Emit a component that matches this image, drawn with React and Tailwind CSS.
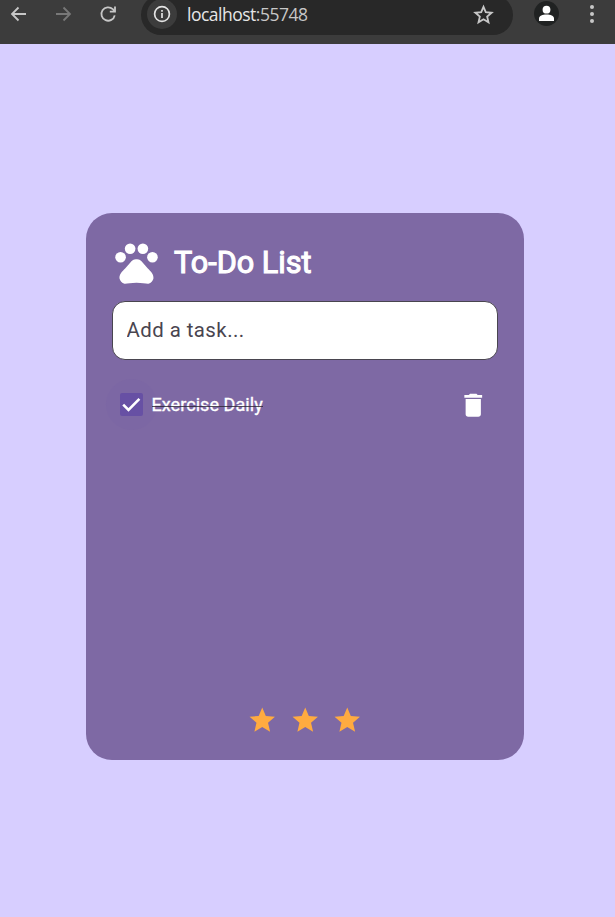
import React from "react";

function BrowserBar() {
  return (
    <header className="flex h-[44px] w-full shrink-0 items-start overflow-hidden bg-[#3c3c3c] text-[#c7c7c7]">
      <div className="flex h-[28px] w-[141px] shrink-0 items-center pl-[9px]">
        <svg className="h-5 w-5" viewBox="0 0 20 20" fill="none" stroke="currentColor" strokeWidth="1.8">
          <path d="M17 10H3.5M9.5 3.5L3 10l6.500 6.500" />
        </svg>
        <svg className="ml-6 h-5 w-5 text-[#787878]" viewBox="0 0 20 20" fill="none" stroke="currentColor" strokeWidth="1.8">
          <path d="M3 10h13.500M10.500 3.500L17 10l-6.500 6.500" />
        </svg>
        <svg className="ml-[25px] h-5 w-5" viewBox="0 0 20 20" fill="none" stroke="currentColor" strokeWidth="1.8">
          <path d="M16.700 11.300A6.700 6.700 0 1 1 14.800 5.200L16.300 6.800" />
          <path d="M17 2.500V7.700H11.800" />
        </svg>
      </div>
      <div className="-mt-[5px] flex h-10 w-[372px] shrink-0 items-center rounded-full bg-[#282828] pl-[6px] pr-[19px]">
        <div className="-mt-[2px] flex h-[30px] w-[30px] items-center justify-center rounded-full bg-[#3c3c3c]">
          <svg className="h-[18px] w-[18px] text-[#e3e3e3]" viewBox="0 0 18 18" fill="none" stroke="currentColor" strokeWidth="1.7">
            <circle cx="9" cy="9" r="7.400" />
            <path d="M9 8v5M9 5v1.700" />
          </svg>
        </div>
        <span className="-mt-[2px] ml-[10px] font-['Open_Sans',sans-serif] text-[17.500px] leading-6 tracking-[-0.5px] text-[#e6e6e6]">
          localhost<span className="text-[#c7c7c7]">:55748</span>
        </span>
        <svg className="-mt-[2px] ml-auto h-[21px] w-[21px]" viewBox="0 0 24 24" fill="none" stroke="currentColor" strokeWidth="2.100">
          <path d="M12 3.200l2.600 6.200 6.700.600-5.100 4.400 1.500 6.500-5.700-3.400-5.700 3.400 1.500-6.500L2.700 10l6.700-.6z" />
        </svg>
      </div>
      <div className="ml-[21px] mt-px flex h-[25px] w-[25px] items-center justify-center rounded-full bg-[#202222]">
        <svg className="h-[17px] w-[17px] text-white" viewBox="0 0 17 17" fill="currentColor">
          <circle cx="8.500" cy="4.700" r="3.900" />
          <path d="M1 16v-2.400c0-2.800 3.500-4 7.500-4s7.500 1.200 7.500 4V16z" />
        </svg>
      </div>
      <div className="ml-[30.500px] mt-[5px] flex flex-col gap-[3px]">
        <i className="h-1 w-1 rounded-full bg-current" />
        <i className="h-1 w-1 rounded-full bg-current" />
        <i className="h-1 w-1 rounded-full bg-current" />
      </div>
    </header>
  );
}

function Paw() {
  return (
    <svg className="h-[51px] w-[51px] shrink-0" viewBox="0 0 24 24" fill="white">
      <circle cx="4.500" cy="9.500" r="2.500" />
      <circle cx="9" cy="5.500" r="2.500" />
      <circle cx="15" cy="5.500" r="2.500" />
      <circle cx="19.500" cy="9.500" r="2.500" />
      <path d="M17.340 14.860c-.87-1.020-1.600-1.890-2.480-2.910-.46-.54-1.050-1.080-1.750-1.320-.11-.04-.22-.07-.33-.09-.25-.04-.52-.04-.78-.04s-.53 0-.79.05c-.11.02-.22.05-.33.09-.7.24-1.280.78-1.750 1.320-.87 1.020-1.600 1.890-2.480 2.910-1.310 1.310-2.920 2.760-2.620 4.790.29 1.020 1.020 2.030 2.330 2.320.73.15 3.060-.44 5.540-.44h.18c2.480 0 4.810.58 5.540.44 1.310-.29 2.040-1.310 2.330-2.320.31-2.040-1.300-3.490-2.610-4.800z" />
    </svg>
  );
}

function Star() {
  return (
    <svg className="h-[30.500px] w-[30.500px]" viewBox="0 0 24 24" fill="#ffab40">
      <path d="M12 17.270L18.180 21l-1.640-7.030L22 9.240l-7.190-.61L12 2 9.190 8.630 2 9.240l5.460 4.730L5.820 21z" />
    </svg>
  );
}

export default function App() {
  return (
    <div className="flex h-[917px] w-[615px] flex-col overflow-hidden bg-[#d7ceff] font-[Roboto,sans-serif]">
      <BrowserBar />
      <main className="ml-[86px] mt-[169px] flex h-[547px] w-[438px] flex-col rounded-[26px] bg-[#7e69a4] px-[26px] pt-[24px]">
        <div className="-ml-[1.500px] flex h-[52px] items-center">
          <div className="-mt-px">
            <Paw />
          </div>
          <h1 className="-mt-px ml-[12.500px] text-[30.600px] font-normal leading-9 text-white [-webkit-text-stroke:1.1px_white]">To-Do List</h1>
        </div>
        <input
          className="mt-[12px] h-[59px] w-[386px] rounded-[13px] border border-[#49454f] bg-white px-[13.500px] pb-[2px] text-[20.400px] tracking-[0.45px] text-[#49454f] outline-none placeholder:text-[#49454f] placeholder:opacity-100"
          placeholder="Add a task..."
        />
        <div className="mt-[19px] flex h-[51px] items-center">
          <div className="-ml-[6px] flex h-[51px] w-[51px] items-center justify-center rounded-full bg-[#7c67a4]">
            <div className="h-[23px] w-[23px] rounded-[2px] bg-[#6750a4]">
              <svg className="h-[23px] w-[23px]" viewBox="0 0 23 23" fill="none" stroke="white" strokeWidth="2.600">
                <path d="M3.200 11.700L8.500 17L19.400 5.900" />
              </svg>
            </div>
          </div>
          <span className="relative -ml-[5.500px] text-[18px] font-normal leading-6 tracking-[0.06px] text-white [-webkit-text-stroke:0.35px_white]">
            Exercise Daily
            <i className="absolute left-0 top-[13px] h-[1.500px] w-full bg-[#2b2633]/80" />
          </span>
          <svg className="ml-auto mr-[9.500px] mt-[2px] h-[30.500px] w-[30.500px]" viewBox="0 0 24 24" fill="white">
            <path d="M6 19c0 1.100.9 2 2 2h8c1.100 0 2-.9 2-2V7H6v12zM19 4h-3.500l-1-1h-5l-1 1H5v2h14V4z" />
          </svg>
        </div>
        <div className="mb-[25px] mt-auto flex justify-center gap-[12px]">
          <Star />
          <Star />
          <Star />
        </div>
      </main>
    </div>
  );
}
